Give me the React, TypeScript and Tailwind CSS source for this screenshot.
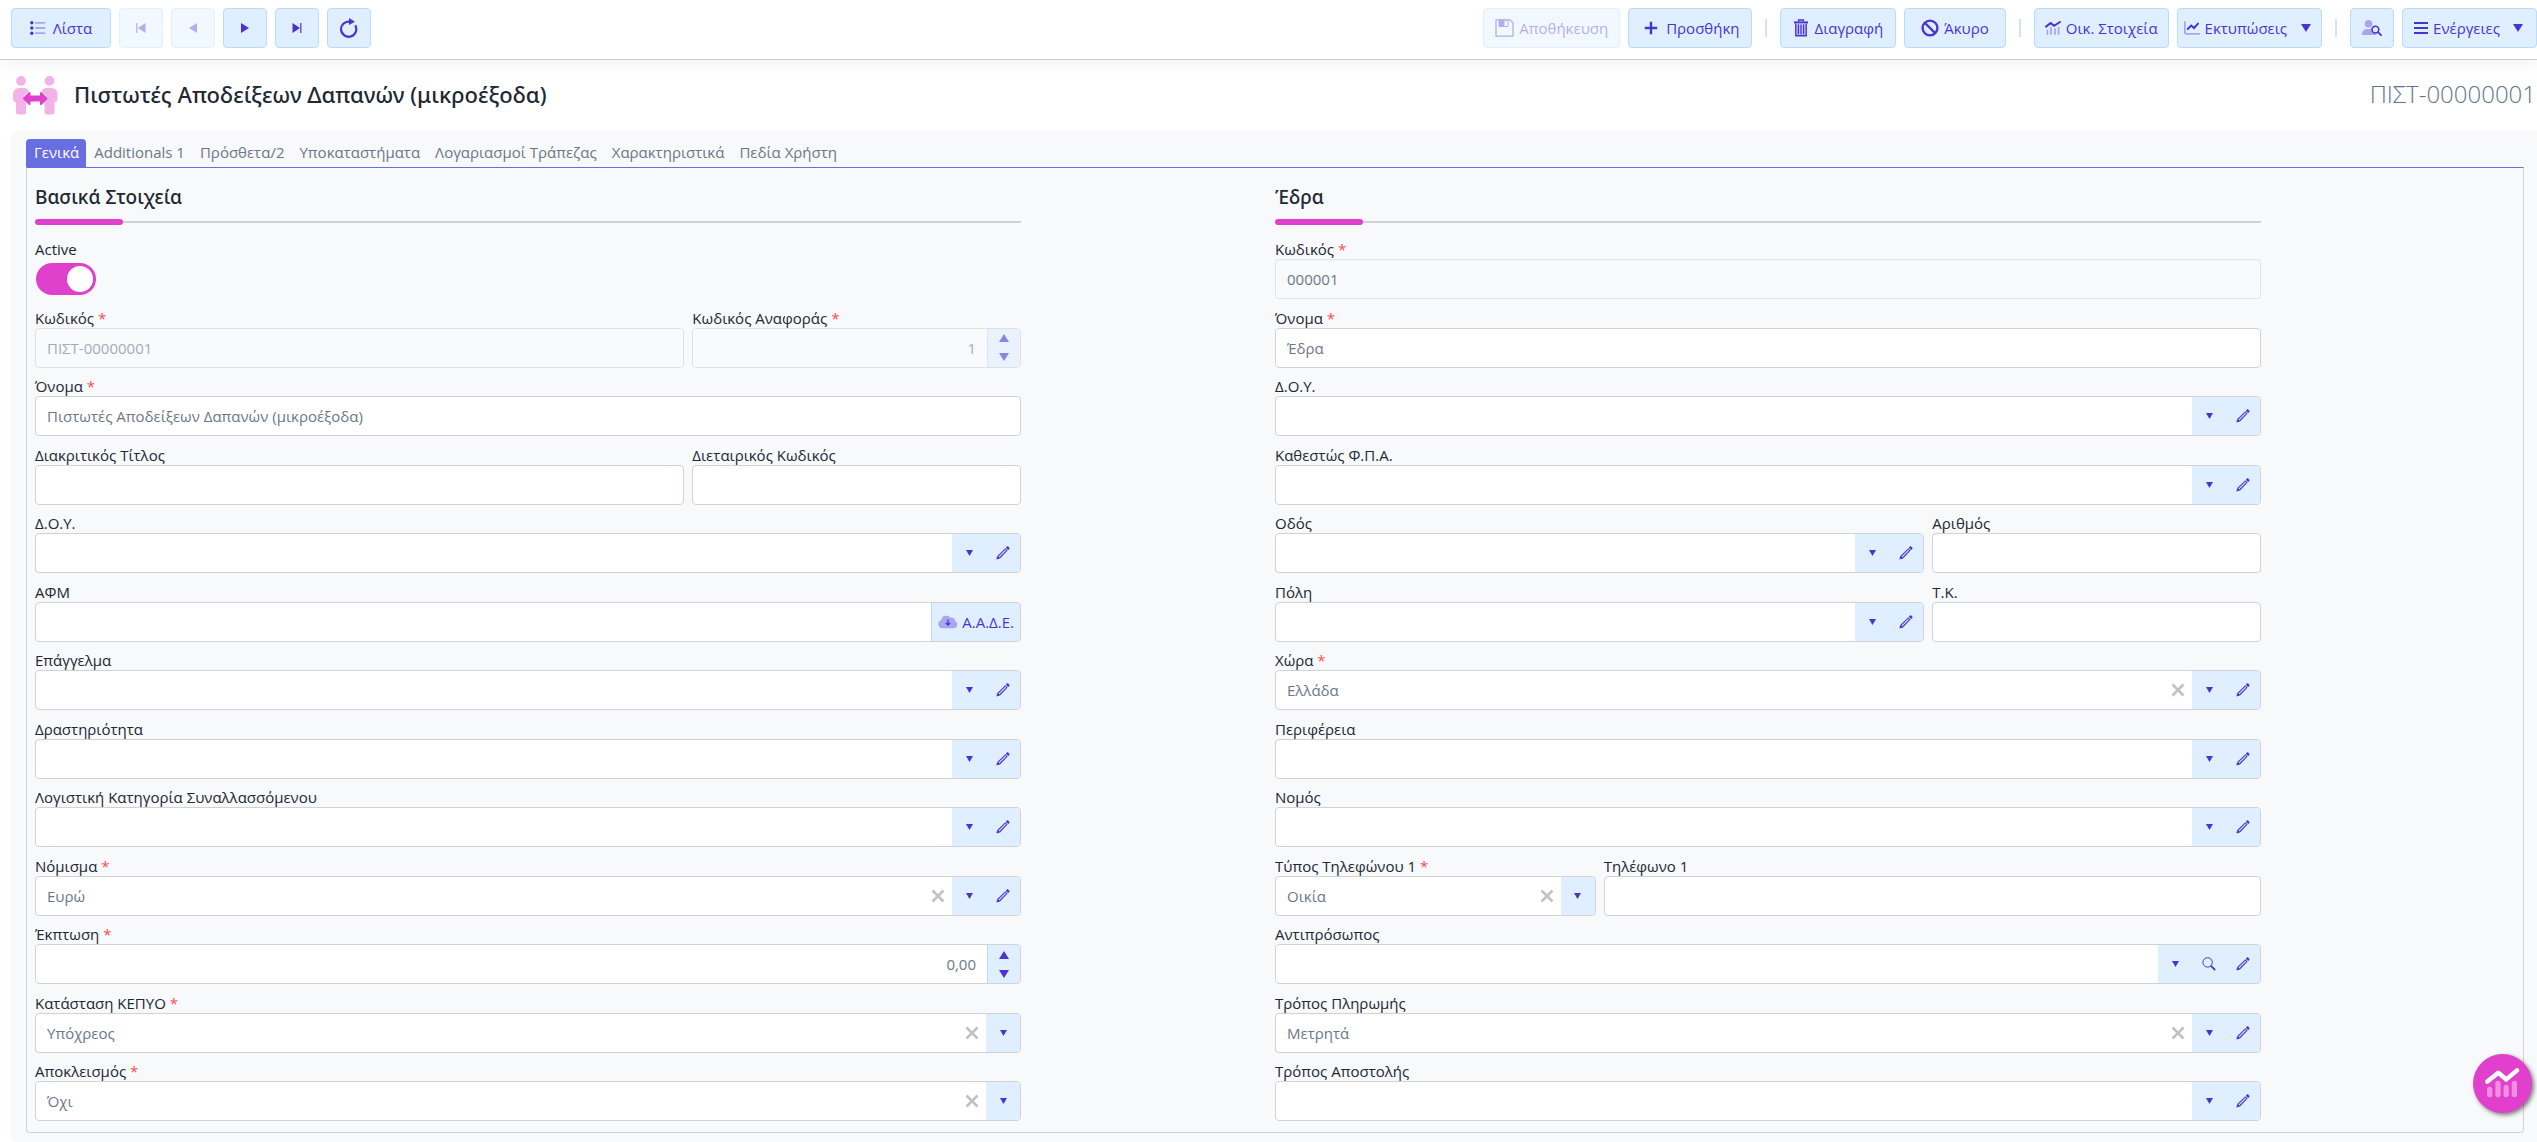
import React, { useId, useState } from "react";

/* ---------- icons ---------- */

const DARK = "#4834d4";
const SOFT = "#a9a5ee";

function ListIcon() {
  return (
    <svg width="16" height="14" viewBox="0 0 16 14" aria-hidden="true">
      <g fill={DARK}>
        <circle cx="1.8" cy="1.8" r="1.7" />
        <circle cx="1.8" cy="7" r="1.7" />
        <circle cx="1.8" cy="12.2" r="1.7" />
      </g>
      <g fill={SOFT}>
        <rect x="5" y="1" width="10.5" height="1.8" rx=".8" />
        <rect x="5" y="6.1" width="10.5" height="1.8" rx=".8" />
        <rect x="5" y="11.2" width="10.5" height="1.8" rx=".8" />
      </g>
    </svg>
  );
}

function FirstIcon() {
  return (
    <svg width="10" height="10" viewBox="0 0 10 10" aria-hidden="true">
      <rect x="0" y="0" width="1.5" height="10" fill={DARK} opacity=".8" />
      <path d="M9.5 0v10L2 5z" fill={DARK} />
    </svg>
  );
}
function PrevIcon() {
  return (
    <svg width="8" height="10" viewBox="0 0 8 10" aria-hidden="true">
      <path d="M8 0v10L0 5z" fill={DARK} />
    </svg>
  );
}
function NextIcon() {
  return (
    <svg width="8" height="10" viewBox="0 0 8 10" aria-hidden="true">
      <path d="M0 0v10l8-5z" fill={DARK} />
    </svg>
  );
}
function LastIcon() {
  return (
    <svg width="10" height="10" viewBox="0 0 10 10" aria-hidden="true">
      <path d="M.5 0v10L8 5z" fill={DARK} />
      <rect x="8" y="0" width="1.5" height="10" fill={DARK} opacity=".8" />
    </svg>
  );
}
function RefreshIcon() {
  return (
    <svg width="18" height="20" viewBox="0 0 18 20" aria-hidden="true">
      <path d="M15.2 7.3A7.6 7.6 0 1 1 9.5 3.6" fill="none" stroke={DARK} strokeWidth="2.2" />
      <path d="M9 0v7l6-3.2z" fill={DARK} />
    </svg>
  );
}
function SaveIcon() {
  return (
    <svg width="19" height="18" viewBox="0 0 19 18" aria-hidden="true">
      <path d="M1 .8h14L18 4v13.2H1z" fill="none" stroke={DARK} strokeWidth="1.3" />
      <path d="M4 1h9v6.5H4z" fill="none" stroke={DARK} strokeWidth="1" />
      <path d="M4 1h5.5v6.5H4z" fill={DARK} />
    </svg>
  );
}
function PlusIcon() {
  return (
    <svg width="20" height="14" viewBox="0 0 20 14" aria-hidden="true">
      <path d="M10 .8v12.4M3.8 7h12.4" stroke={DARK} strokeWidth="2.4" />
    </svg>
  );
}
function TrashIcon() {
  return (
    <svg width="16" height="18" viewBox="0 0 16 18" aria-hidden="true">
      <path d="M5.5 2.5V1h5v1.5" fill="none" stroke={DARK} strokeWidth="1.3" />
      <path d="M1 3.4h14" stroke={DARK} strokeWidth="2" />
      <path d="M2.8 4.5v12.2h10.4V4.5" fill={SOFT} fillOpacity=".5" stroke={DARK} strokeWidth="1.4" />
      <path d="M5.4 5.5v10M8 5.5v10M10.6 5.5v10" stroke={DARK} strokeWidth="1.3" />
    </svg>
  );
}
function BanIcon() {
  return (
    <svg width="18" height="18" viewBox="0 0 18 18" aria-hidden="true">
      <circle cx="9" cy="9" r="7.4" fill="none" stroke={DARK} strokeWidth="2.4" />
      <path d="M4 4l10 10" stroke={DARK} strokeWidth="2.4" />
    </svg>
  );
}
function StatsIcon() {
  return (
    <svg width="16" height="14" viewBox="0 0 16 14" aria-hidden="true">
      <path d="M1 5.6l4.6-3.5 3.6 2.7L15 1" fill="none" stroke={DARK} strokeWidth="2" strokeLinecap="round" />
      <path d="M2.4 9.4V13M6 6.6V13M10 8V13M13.6 6.6V13" stroke={SOFT} strokeWidth="1.8" strokeLinecap="round" />
    </svg>
  );
}
function ChartIcon() {
  return (
    <svg width="16" height="14" viewBox="0 0 16 14" aria-hidden="true">
      <path d="M.9 1v10.6c0 .8.5 1.3 1.3 1.3h13" fill="none" stroke={SOFT} strokeWidth="1.8" strokeLinecap="round" />
      <path d="M3.8 8l3.4-3.4L10 7l4-4.4" fill="none" stroke={DARK} strokeWidth="2" strokeLinecap="round" />
    </svg>
  );
}
function UserSearchIcon() {
  return (
    <svg width="20" height="16" viewBox="0 0 20 16" aria-hidden="true">
      <circle cx="6.6" cy="3.8" r="3.8" fill={SOFT} />
      <path d="M0 15c0-4 2.2-6 5-6h4.5c.3 2.6 2 4.4 5 4.8V15z" fill={SOFT} />
      <circle cx="13.4" cy="9.6" r="3.4" fill="#e0efff" stroke={DARK} strokeWidth="1.6" />
      <path d="M16 12.2l3 3" stroke={DARK} strokeWidth="1.8" strokeLinecap="round" />
    </svg>
  );
}
function MenuIcon() {
  return (
    <svg width="14" height="12" viewBox="0 0 14 12" aria-hidden="true">
      <path d="M0 1h14M0 6h14M0 11h14" stroke={DARK} strokeWidth="2" />
    </svg>
  );
}
function CaretIcon() {
  return (
    <svg width="10" height="8" viewBox="0 0 10 8" aria-hidden="true">
      <path d="M0 0h10L5 8z" fill={DARK} />
    </svg>
  );
}
function CaretUpIcon() {
  return (
    <svg width="10" height="8" viewBox="0 0 10 8" aria-hidden="true">
      <path d="M0 8h10L5 0z" fill={DARK} />
    </svg>
  );
}
function SmallCaretIcon() {
  return (
    <svg width="7" height="6" viewBox="0 0 7 6" aria-hidden="true">
      <path d="M0 0h7L3.5 6z" fill={DARK} />
    </svg>
  );
}
function PencilIcon() {
  return (
    <svg width="14" height="14" viewBox="0 0 14 14" aria-hidden="true">
      <path d="M.4 13.5l.9-3.6 8-7.6 2.3 2.3-7.6 8z" fill={DARK} />
      <path d="M9.8 1.7L11 .6c.4-.4.8-.4 1.2 0l1.1 1.1c.4.4.4.8 0 1.2l-1.1 1.2z" fill={DARK} />
      <path d="M2.8 11l7-7" stroke="#d4dbfb" strokeWidth="1.1" />
    </svg>
  );
}
function SearchIcon() {
  return (
    <svg width="14" height="14" viewBox="0 0 14 14" aria-hidden="true">
      <circle cx="5.6" cy="5.4" r="4.7" fill="none" stroke={DARK} strokeWidth="1" />
      <path d="M9 8.9l4.2 4.2" stroke={DARK} strokeWidth="1.9" />
    </svg>
  );
}
function ClearIcon() {
  return (
    <svg width="14" height="14" viewBox="0 0 14 14" aria-hidden="true">
      <path d="M1.5 1.5l11 11M12.5 1.5l-11 11" stroke="#bfc1c4" strokeWidth="2.5" />
    </svg>
  );
}
function CloudIcon() {
  return (
    <svg width="20" height="14" viewBox="0 0 20 14" aria-hidden="true">
      <path d="M4.4 13.2a4.1 4.1 0 0 1-1.2-8A5.3 5.3 0 0 1 12.6 2.7a3.3 3.3 0 0 1 4.4 3.4A3.7 3.7 0 0 1 16 13.2z" fill={SOFT} />
      <path d="M10 4.5v5.5M7.7 7.9l2.3 2.3 2.3-2.3" fill="none" stroke={DARK} strokeWidth="1.3" />
    </svg>
  );
}
function PeopleIcon() {
  return (
    <svg width="45" height="39" viewBox="0 0 45 39" aria-hidden="true">
      <g fill="#f3b3e8">
        <circle cx="8" cy="4.9" r="4.9" />
        <circle cx="36.5" cy="4.9" r="4.9" />
        <path d="M6 12h6a5 5 0 0 1 4 3l-5 5 2 6v10a2.5 2.5 0 0 1-2.5 2.5h-5A2.5 2.5 0 0 1 3 36V26.5C1 26 0 24.5 0 22.5V18a6 6 0 0 1 6-6z" />
        <path d="M38.5 12h-6a5 5 0 0 0-4 3l5 5-2 6v10a2.5 2.5 0 0 0 2.5 2.5h5a2.5 2.5 0 0 0 2.5-2.5v-9.5c2-.5 3-2 3-4V18a6 6 0 0 0-6-6z" />
      </g>
      <path d="M11 22.5l5.5-5.5v3.5h11.5V17l5.5 5.5L28 28v-3.5H16.5V28z" fill="#e040cb" stroke="#e040cb" strokeWidth="2" strokeLinejoin="round" />
    </svg>
  );
}

/* ---------- toolbar ---------- */

function Tool({ className = "", ...rest }: React.ButtonHTMLAttributes<HTMLButtonElement>) {
  return (
    <button
      type="button"
      {...rest}
      className={
        "flex h-10 shrink-0 items-center justify-center gap-[5px] whitespace-nowrap rounded border border-[#b8dcff] bg-[#e0efff] text-[#4834d4] disabled:opacity-40 " +
        className
      }
    />
  );
}

function Separator() {
  return <span className="mx-[5px] h-[18px] w-0.5 shrink-0 bg-[#d8e1ec]" />;
}

function Toolbar() {
  return (
    <header className="relative flex h-[60px] items-center justify-between gap-8 border-b border-[#cdced0] bg-white pb-[3px] pl-[11px] shadow-[0_4px_16px_rgba(0,0,0,0.06)]">
      <div className="flex gap-2">
        <Tool className="w-[100px] gap-[7px]"><ListIcon />Λίστα</Tool>
        <Tool className="w-11" disabled aria-label="Πρώτη"><FirstIcon /></Tool>
        <Tool className="w-11" disabled aria-label="Προηγούμενη"><PrevIcon /></Tool>
        <Tool className="w-11" aria-label="Επόμενη"><NextIcon /></Tool>
        <Tool className="w-11" aria-label="Τελευταία"><LastIcon /></Tool>
        <Tool className="w-11" aria-label="Ανανέωση"><RefreshIcon /></Tool>
      </div>
      <div className="flex items-center gap-2">
        <Tool className="px-[11px]" disabled><SaveIcon />Αποθήκευση</Tool>
        <Tool className="px-3"><PlusIcon />Προσθήκη</Tool>
        <Separator />
        <Tool className="px-3"><TrashIcon />Διαγραφή</Tool>
        <Tool className="px-4"><BanIcon />Άκυρο</Tool>
        <Separator />
        <Tool className="px-[10px]"><StatsIcon />Οικ. Στοιχεία</Tool>
        <Tool className="pl-[6px] pr-[10px]" aria-haspopup="menu">
          <ChartIcon />Εκτυπώσεις<span className="pl-[9px]"><CaretIcon /></span>
        </Tool>
        <Separator />
        <Tool className="w-11" aria-label="Αναζήτηση χρήστη"><UserSearchIcon /></Tool>
        <Tool className="pl-[11px] pr-[13px]" aria-haspopup="menu">
          <MenuIcon />Ενέργειες<span className="pl-2"><CaretIcon /></span>
        </Tool>
      </div>
    </header>
  );
}

/* ---------- form fields ---------- */

type Action = "caret" | "search" | "edit";

type FieldProps = {
  label: string;
  required?: boolean;
  value?: string;
  disabled?: boolean;
  readOnly?: boolean;
  clearable?: boolean;
  actions?: Action[];
  spinner?: boolean;
  lookup?: string;
  className?: string;
};

const actionNames: Record<Action, string> = { caret: "Άνοιγμα", search: "Αναζήτηση", edit: "Επεξεργασία" };

function FieldLabel({ id, label, required }: { id: string; label: string; required?: boolean }) {
  return (
    <label htmlFor={id} className="block h-5 whitespace-nowrap leading-5 text-[#212733]">
      {label}
      {required && <span className="text-[#ff4d4d]"> *</span>}
    </label>
  );
}

function Field({ label, required, value = "", disabled, readOnly, clearable, actions = [], spinner, lookup, className = "flex-1" }: FieldProps) {
  const id = useId();
  const [text, setText] = useState(value);
  const box = disabled
    ? "border-[#d0d2d4] bg-[#fafcfe] opacity-60"
    : readOnly
      ? "border-[#dee5ec] bg-[#f8fafc]"
      : "border-[#d0d2d4] bg-white";
  return (
    <div className={"min-w-0 " + className}>
      <FieldLabel id={id} label={label} required={required} />
      <div className={"flex h-10 overflow-hidden rounded border " + box}>
        <input
          id={id}
          type="text"
          role={actions.length ? "combobox" : undefined}
          aria-expanded={actions.length ? false : undefined}
          aria-required={required}
          disabled={disabled}
          readOnly={readOnly}
          value={text}
          onChange={(e) => setText(e.target.value)}
          className={"min-w-0 flex-1 bg-transparent px-[11px] text-[#6b7788] outline-none " + (spinner ? "text-right" : "")}
        />
        {clearable && (
          <button type="button" aria-label="Καθαρισμός" onClick={() => setText("")} className="flex w-7 items-center justify-center">
            <ClearIcon />
          </button>
        )}
        {actions.map((a) => (
          <button key={a} type="button" aria-label={actionNames[a]} className="flex w-[34px] items-center justify-center bg-[#e0efff]">
            {a === "caret" ? <SmallCaretIcon /> : a === "search" ? <SearchIcon /> : <PencilIcon />}
          </button>
        ))}
        {spinner && (
          <div className="flex w-[33px] flex-col border-l border-[#b8dcff] bg-[#e0efff]">
            <button type="button" aria-label="Αύξηση" disabled={disabled} className="flex flex-1 items-center justify-center"><CaretUpIcon /></button>
            <button type="button" aria-label="Μείωση" disabled={disabled} className="flex flex-1 items-center justify-center"><CaretIcon /></button>
          </div>
        )}
        {lookup && (
          <button type="button" className="-my-px -mr-px flex items-center gap-1 rounded-r border border-[#b8dcff] bg-[#e0efff] px-[6px] text-[#4834d4]">
            <CloudIcon />{lookup}
          </button>
        )}
      </div>
    </div>
  );
}

function Row({ children }: { children: React.ReactNode }) {
  return <div className="flex gap-2">{children}</div>;
}

function Toggle({ label }: { label: string }) {
  const id = useId();
  return (
    <div>
      <FieldLabel id={id} label={label} />
      <div className="flex h-10 items-center pl-px">
        <input
          id={id}
          type="checkbox"
          role="switch"
          defaultChecked
          className="flex h-8 w-[60px] appearance-none items-center rounded-full bg-gray-300 px-[3px] before:size-[26px] before:rounded-full before:bg-white checked:justify-end checked:bg-[#e040cb]"
        />
      </div>
    </div>
  );
}

function Section({ title, children }: { title: string; children: React.ReactNode }) {
  return (
    <section className="flex w-4/5 flex-col pr-1.5">
      <h2 className="pt-[15px] font-['Noto_Sans',sans-serif] text-[19px] font-medium leading-7 text-[#212733]">{title}</h2>
      <div className="mb-[14px] mt-2 flex items-center">
        <span className="h-[6px] w-[88px] rounded-full bg-[#e040cb]" />
        <span className="h-0.5 flex-1 bg-[#d0d2d4]" />
      </div>
      <div className="flex flex-1 flex-col justify-between gap-2">{children}</div>
    </section>
  );
}

const tabs = ["Γενικά", "Additionals 1", "Πρόσθετα/2", "Υποκαταστήματα", "Λογαριασμοί Τράπεζας", "Χαρακτηριστικά", "Πεδία Χρήστη"];

const PICK: Action[] = ["caret"];
const PICK_EDIT: Action[] = ["caret", "edit"];
const PICK_FIND_EDIT: Action[] = ["caret", "search", "edit"];

export default function App() {
  return (
    <div className="flex min-h-screen flex-col overflow-x-hidden bg-white font-['Open_Sans','Noto_Sans',sans-serif] text-[15px] leading-5">
      <Toolbar />
      <div className="flex h-[71px] items-center justify-between pl-[13px] pr-px">
        <div className="flex items-center gap-4">
          <PeopleIcon />
          <h1 className="pb-[3px] font-['Noto_Sans',sans-serif] text-[22px] font-medium leading-8 text-[#212733]">Πιστωτές Αποδείξεων Δαπανών (μικροέξοδα)</h1>
        </div>
        <span className="pb-[3px] text-2xl font-light text-[#64748b]">ΠΙΣΤ-00000001</span>
      </div>

      <main className="ml-[11px] flex flex-1 flex-col rounded-l-md bg-[#f8f9fb] pb-[9px] pl-[15px] pr-[13px] pt-2">
        <div role="tablist" className="flex">
          {tabs.map((t, i) => (
            <button
              key={t}
              type="button"
              role="tab"
              aria-selected={i === 0}
              className={"h-7 whitespace-nowrap pb-[2px] pl-2 pr-[7px] " + (i === 0 ? "rounded-t bg-[#686de0] text-white" : "text-[#6b7788]")}
            >
              {t}
            </button>
          ))}
        </div>

        <div role="tabpanel" className="grid flex-1 grid-cols-2 rounded-b border border-[#d0d2d4] border-t-[#686de0] px-2 pb-[11px]">
          <Section title="Βασικά Στοιχεία">
            <Toggle label="Active" />
            <Row>
              <Field label="Κωδικός" required disabled value="ΠΙΣΤ-00000001" />
              <Field label="Κωδικός Αναφοράς" required disabled spinner value="1" className="w-1/3" />
            </Row>
            <Row><Field label="Όνομα" required value="Πιστωτές Αποδείξεων Δαπανών (μικροέξοδα)" /></Row>
            <Row>
              <Field label="Διακριτικός Τίτλος" />
              <Field label="Διεταιρικός Κωδικός" className="w-1/3" />
            </Row>
            <Row><Field label="Δ.Ο.Υ." actions={PICK_EDIT} /></Row>
            <Row><Field label="ΑΦΜ" lookup="Α.Α.Δ.Ε." /></Row>
            <Row><Field label="Επάγγελμα" actions={PICK_EDIT} /></Row>
            <Row><Field label="Δραστηριότητα" actions={PICK_EDIT} /></Row>
            <Row><Field label="Λογιστική Κατηγορία Συναλλασσόμενου" actions={PICK_EDIT} /></Row>
            <Row><Field label="Νόμισμα" required value="Ευρώ" clearable actions={PICK_EDIT} /></Row>
            <Row><Field label="Έκπτωση" required value="0,00" spinner /></Row>
            <Row><Field label="Κατάσταση ΚΕΠΥΟ" required value="Υπόχρεος" clearable actions={PICK} /></Row>
            <Row><Field label="Αποκλεισμός" required value="Όχι" clearable actions={PICK} /></Row>
          </Section>

          <Section title="Έδρα">
            <Row><Field label="Κωδικός" required readOnly value="000001" /></Row>
            <Row><Field label="Όνομα" required value="Έδρα" /></Row>
            <Row><Field label="Δ.Ο.Υ." actions={PICK_EDIT} /></Row>
            <Row><Field label="Καθεστώς Φ.Π.Α." actions={PICK_EDIT} /></Row>
            <Row>
              <Field label="Οδός" actions={PICK_EDIT} />
              <Field label="Αριθμός" className="w-1/3" />
            </Row>
            <Row>
              <Field label="Πόλη" actions={PICK_EDIT} />
              <Field label="Τ.Κ." className="w-1/3" />
            </Row>
            <Row><Field label="Χώρα" required value="Ελλάδα" clearable actions={PICK_EDIT} /></Row>
            <Row><Field label="Περιφέρεια" actions={PICK_EDIT} /></Row>
            <Row><Field label="Νομός" actions={PICK_EDIT} /></Row>
            <Row>
              <Field label="Τύπος Τηλεφώνου 1" required value="Οικία" clearable actions={PICK} />
              <Field label="Τηλέφωνο 1" className="w-2/3" />
            </Row>
            <Row><Field label="Αντιπρόσωπος" actions={PICK_FIND_EDIT} /></Row>
            <Row><Field label="Τρόπος Πληρωμής" value="Μετρητά" clearable actions={PICK_EDIT} /></Row>
            <Row><Field label="Τρόπος Αποστολής" actions={PICK_EDIT} /></Row>
          </Section>
        </div>
      </main>

      <button
        type="button"
        aria-label="Στατιστικά"
        className="fixed bottom-[29px] right-[5px] size-[59px] rounded-full bg-[#e040cb] shadow-[2px_2px_4px_rgba(0,0,0,0.5)]"
      >
        <svg width="59" height="59" viewBox="0 0 59 59" aria-hidden="true">
          <path d="M16.7 35.3v5.3M25 29.3v11.3M33.2 33.3v7.3M41.4 29.3v11.3" stroke="#f08fe0" strokeWidth="5.3" strokeLinecap="round" />
          <path d="M14.3 27.5l11-8.7 8 6.6 10.7-9" fill="none" stroke="#fff" strokeWidth="4.5" strokeLinecap="round" strokeLinejoin="round" />
        </svg>
      </button>
    </div>
  );
}
